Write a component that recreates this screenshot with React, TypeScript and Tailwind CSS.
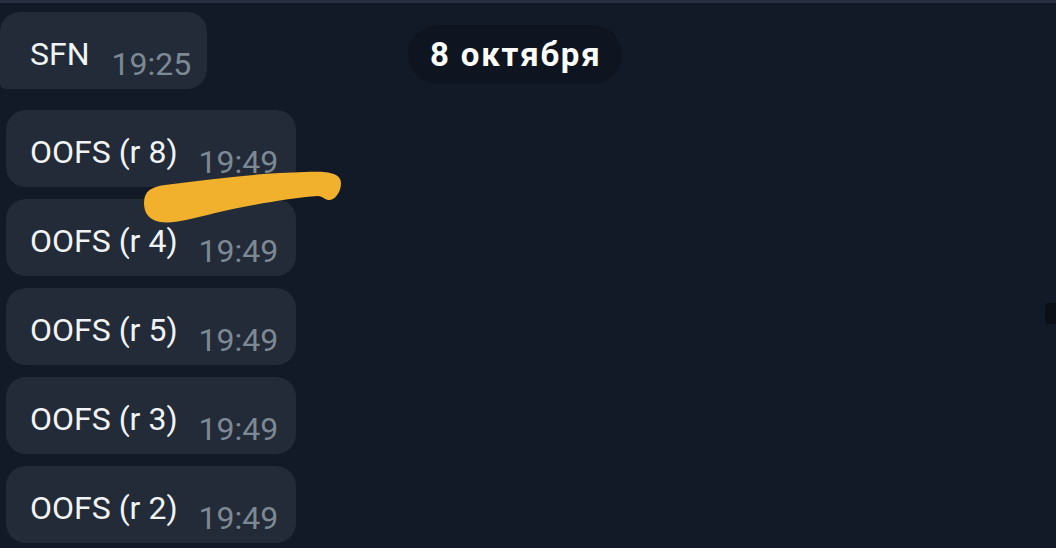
export default function App() {
  const rows = ["OOFS (r 8)", "OOFS (r 4)", "OOFS (r 5)", "OOFS (r 3)", "OOFS (r 2)"];
  return (
    <div
      className="relative w-[1056px] h-[548px] overflow-hidden bg-[#131a27] text-[#f1f3f5]"
      style={{ fontFamily: "Roboto, 'Noto Sans', sans-serif" }}
    >
      <div className="h-[3px] bg-[#263040]" />
      <div className="flex">
        {/* messages column */}
        <div className="flex flex-col w-[296px] pt-[9px]">
          <div className="flex items-start h-[77px] w-[207px] bg-[#222b37] rounded-[20px] rounded-bl-[6px] pl-[30px] pt-[26px]">
            <span className="text-[32px] leading-[32px]">SFN</span>
            <span className="ml-[22px] mt-[10px] text-[32px] leading-[32px] text-[#7d8895]">19:25</span>
          </div>
          <div className="flex flex-col gap-[12px] mt-[21px] pl-[6px]">
            {rows.map((r, i) => (
              <div
                key={i}
                className="flex items-start h-[77px] w-[290px] bg-[#222b37] rounded-[20px] pl-[24px] pt-[26px]"
              >
                <span className="text-[32px] leading-[32px]">{r}</span>
                <span className="ml-[21px] mt-[10px] text-[32px] leading-[32px] text-[#7d8895]">19:49</span>
              </div>
            ))}
          </div>
        </div>

        {/* date pill */}
        <div className="ml-[112px] mt-[22px]">
          <div className="flex items-center h-[59px] pl-[22px] pr-[21px] rounded-full bg-[#0f1520] text-[33px] font-bold tracking-[1.8px] text-white">
            8 октября
          </div>
        </div>
      </div>

      {/* marker scribble over the chat */}
      <svg className="absolute left-0 top-0 pointer-events-none" width="1056" height="548">
        <path
          d="M144 203 C144 191 151 187 165 185 C210 179 260 173 305 172 C325 171 341 172 341 183 C341 193 334 201 328 200 C324 199 322 196 318 196 C290 198 250 205 215 213 C195 218 175 224 160 222 C149 220 144 213 144 203 Z"
          fill="#f2b12c"
        />
      </svg>

      {/* edge handle on the right */}
      <div className="absolute right-0 top-[303px] w-[11px] h-[21px] rounded-l-[3px] bg-[#0b0f16]" />
    </div>
  );
}
